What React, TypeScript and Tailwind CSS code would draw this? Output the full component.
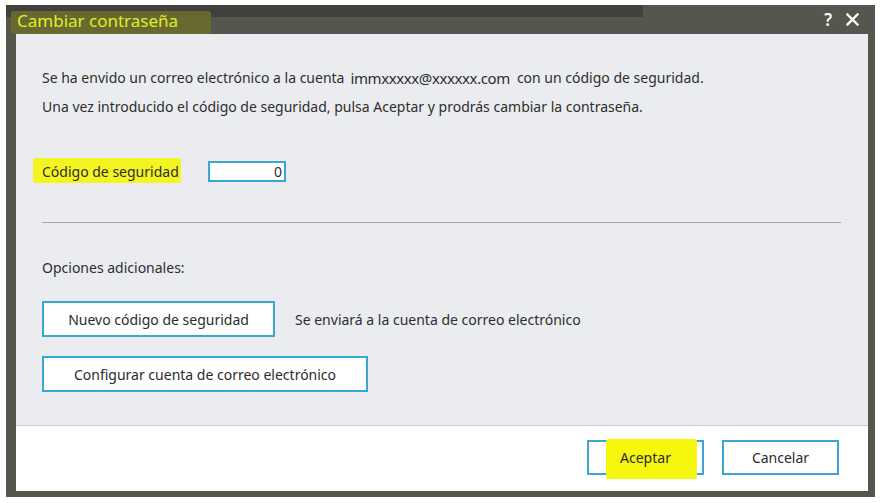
import React from "react";

const font = { fontFamily: '"Noto Sans", "Open Sans", sans-serif' };

function Btn({ children, className = "" }: { children: React.ReactNode; className?: string }) {
  return (
    <div
      className={
        "relative flex items-center justify-center border-2 border-[#3aa6d2] bg-white text-[14px] text-[#2b2b2b] " +
        className
      }
    >
      {children}
    </div>
  );
}

export default function App() {
  return (
    <div className="w-[881px] h-[503px] bg-white overflow-hidden pt-[5px] pl-[6px]" style={font}>
      <div className="w-[869px] h-[492px] bg-[#55564e] flex flex-col">
        {/* title bar */}
        <div className="relative h-[29px] shrink-0 flex items-center">
          <div className="absolute left-0 top-0 w-[637px] h-[12px] bg-[#40413c]" />
          <div className="absolute left-[5px] top-[6px] w-[200px] h-[23px] bg-[#686a2e] rounded-[3px] opacity-95" />
          <span className="relative ml-[11px] mt-[1px] text-[17px] leading-none text-[#e2ee22]">Cambiar contraseña</span>
          <div className="relative ml-auto mr-[16px] flex items-center gap-[14px] text-white">
            <span className="text-[17px] leading-none font-semibold">?</span>
            <svg width="13" height="13" viewBox="0 0 13 13">
              <path d="M1.5 1.5 L11.5 11.5 M11.5 1.5 L1.5 11.5" stroke="white" strokeWidth="2.4" strokeLinecap="square" />
            </svg>
          </div>
        </div>
        {/* body */}
        <div className="ml-[10px] mr-[7px] mb-[6px] flex-1 flex flex-col">
          <div className="h-[392px] bg-[#ebecef] border-b border-[#c9cacc] pl-[26px] pr-[27px] pt-[34px] text-[14px] text-[#2e2e2e]">
            <div className="h-[20px] leading-[20px] flex items-center whitespace-nowrap">
              <span>Se ha envido un correo electrónico a la cuenta</span>
              <span className="ml-[6px] text-[15px] tracking-[-0.4px]">immxxxxx@xxxxxx.com</span>
              <span className="ml-[7px]">con un código de seguridad.</span>
            </div>
            <div className="mt-[9px] h-[20px] leading-[20px] whitespace-nowrap">
              Una vez introducido el código de seguridad, pulsa Aceptar y prodrás cambiar la contraseña.
            </div>
            <div className="mt-[44px] flex items-center h-[21px]">
              <div className="relative w-[166px] h-[21px] flex items-center">
                <div className="absolute -left-[9px] -top-[3px] w-[148px] h-[25px] bg-[#f3f421] rounded-[3px]" />
                <span className="relative">Código de seguridad</span>
              </div>
              <div className="w-[78px] h-[21px] border-2 border-[#3aa6d2] bg-white flex items-center justify-end pr-[2px] text-[14px]">
                0
              </div>
            </div>
            <div className="mt-[40px] h-px bg-[#a5a6a8]" />
            <div className="mt-[35px] h-[20px] leading-[20px]">Opciones adicionales:</div>
            <div className="mt-[23px] flex items-center">
              <Btn className="w-[233px] h-[36px]">Nuevo código de seguridad</Btn>
              <span className="ml-[20px]">Se enviará a la cuenta de correo electrónico</span>
            </div>
            <Btn className="mt-[19px] w-[326px] h-[36px]">Configurar cuenta de correo electrónico</Btn>
          </div>
          <div className="flex-1 bg-white flex items-start justify-end pt-[14px] pr-[29px] gap-[18px]">
            <Btn className="w-[117px] h-[35px]">
              <div className="absolute left-[17px] -top-[3px] w-[91px] h-[40px] bg-[#f6f60f] rounded-[3px]" />
              <span className="relative">Aceptar</span>
            </Btn>
            <Btn className="w-[117px] h-[35px]">Cancelar</Btn>
          </div>
        </div>
      </div>
    </div>
  );
}
